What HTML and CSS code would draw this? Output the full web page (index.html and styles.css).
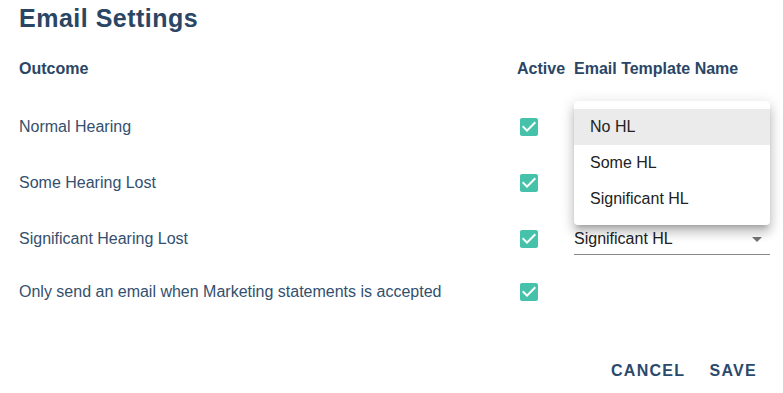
FILE: index.html
```
<html>
  <head>
    <link rel="stylesheet" href="styles.css">
    <title>Email Settings</title>
  </head>
  <body>
    <div class="page">
      <h1>Email Settings</h1>

      <div class="settings">
        <div class="row head">
          <div>Outcome</div>
          <div>Active</div>
          <div>Email Template Name</div>
        </div>

        <div class="row">
          <div>Normal Hearing</div>
          <div><svg class="check" viewBox="0 0 24 24"><path d="M19 3H5c-1.11 0-2 .9-2 2v14c0 1.1.89 2 2 2h14c1.11 0 2-.9 2-2V5c0-1.1-.89-2-2-2zm-9 14l-5-5 1.41-1.41L10 14.17l7.59-7.59L19 8l-9 9z"/></svg></div>
          <div></div>
        </div>

        <div class="row">
          <div>Some Hearing Lost</div>
          <div><svg class="check" viewBox="0 0 24 24"><path d="M19 3H5c-1.11 0-2 .9-2 2v14c0 1.1.89 2 2 2h14c1.11 0 2-.9 2-2V5c0-1.1-.89-2-2-2zm-9 14l-5-5 1.41-1.41L10 14.17l7.59-7.59L19 8l-9 9z"/></svg></div>
          <div></div>
        </div>

        <div class="row">
          <div>Significant Hearing Lost</div>
          <div><svg class="check" viewBox="0 0 24 24"><path d="M19 3H5c-1.11 0-2 .9-2 2v14c0 1.1.89 2 2 2h14c1.11 0 2-.9 2-2V5c0-1.1-.89-2-2-2zm-9 14l-5-5 1.41-1.41L10 14.17l7.59-7.59L19 8l-9 9z"/></svg></div>
          <div class="select">
            <span>Significant HL</span>
            <svg class="arrow" viewBox="0 0 10 5"><path d="M0 0h10L5 5z"/></svg>
          </div>
        </div>

        <div class="row last">
          <div>Only send an email when Marketing statements is accepted</div>
          <div><svg class="check" viewBox="0 0 24 24"><path d="M19 3H5c-1.11 0-2 .9-2 2v14c0 1.1.89 2 2 2h14c1.11 0 2-.9 2-2V5c0-1.1-.89-2-2-2zm-9 14l-5-5 1.41-1.41L10 14.17l7.59-7.59L19 8l-9 9z"/></svg></div>
          <div></div>
        </div>

        <!-- open template menu -->
        <ul class="menu">
          <li class="selected">No HL</li>
          <li>Some HL</li>
          <li>Significant HL</li>
        </ul>
      </div>

      <div class="actions">
        <button>Cancel</button>
        <button>Save</button>
      </div>
    </div>
  </body>
</html>
```

FILE: styles.css
```
body {
    font-family: "Liberation Sans", Arial, sans-serif;
    background-color: #fff;
    color: #33506e;
    margin: 0;
    padding: 0;
}

.page {
    padding: 0 13px 0 19px;
}

h1 {
    margin: 0;
    height: 36px;
    line-height: 36px;
    font-size: 25px;
    letter-spacing: 0.5px;
    color: #2a4664;
}

.settings {
    position: relative;
    margin-top: 13px;
}

/* Rows share the same three columns */
.row {
    display: grid;
    grid-template-columns: 1fr 57px 196px;
    align-items: center;
    height: 56px;
    font-size: 16px;
}

.row.head {
    height: 40px;
    margin-bottom: 10px;
    font-weight: bold;
    color: #2a4664;
}

.row.last {
    height: 50px;
}

.check {
    display: block;
    width: 24px;
    height: 24px;
    fill: #47c2aa;
}

.select {
    display: flex;
    align-items: center;
    justify-content: space-between;
    padding: 6px 0 5px;
    line-height: 20px;
    color: #222;
    border-bottom: 1px solid #8a8a8a;
}

.arrow {
    width: 10px;
    height: 5px;
    margin-right: 8px;
    fill: #757575;
}

/* Dropdown menu lies over the rows */
.menu {
    position: absolute;
    top: 52px;
    right: 0;
    width: 196px;
    margin: 0;
    padding: 8px 0;
    list-style: none;
    background-color: #fff;
    border-radius: 4px;
    box-shadow: 0 5px 5px -3px rgba(0, 0, 0, 0.2), 0 8px 10px 1px rgba(0, 0, 0, 0.14), 0 3px 14px 2px rgba(0, 0, 0, 0.12);
}

.menu li {
    height: 36px;
    line-height: 36px;
    padding-left: 16px;
    font-size: 16px;
    color: #222;
}

.menu li.selected {
    background-color: #ebebeb;
}

.actions {
    display: flex;
    justify-content: flex-end;
    gap: 8px;
    margin-top: 36px;
    margin-right: 5px;
}

.actions button {
    height: 36px;
    padding: 0 8px;
    border: none;
    background: none;
    font-family: inherit;
    font-size: 16px;
    font-weight: bold;
    letter-spacing: 1.3px;
    text-transform: uppercase;
    color: #2a4a6c;
}
```
